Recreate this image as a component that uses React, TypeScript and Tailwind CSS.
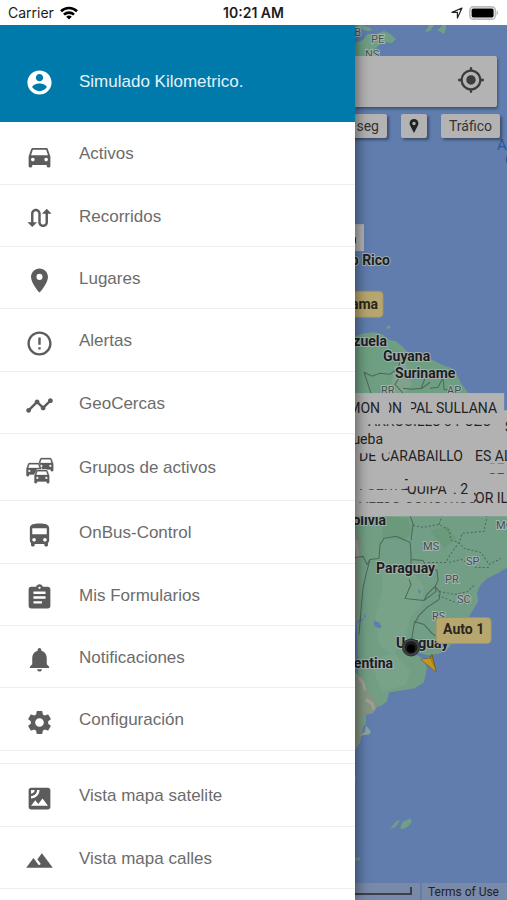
import type { ReactNode } from "react";
import type { IconType } from "react-icons";
import {
  MdAssignment,
  MdDirectionsBus,
  MdDirectionsCar,
  MdErrorOutline,
  MdMyLocation,
  MdNotifications,
  MdPlace,
  MdSatellite,
  MdSettings,
  MdSwapCalls,
  MdTerrain,
  MdTimeline,
} from "react-icons/md";

type MenuItem = {
  label: string;
  icon: IconType | typeof CarGroupIcon;
  tall?: boolean;
};

const mainItems: MenuItem[] = [
  { label: "Activos", icon: MdDirectionsCar },
  { label: "Recorridos", icon: MdSwapCalls },
  { label: "Lugares", icon: MdPlace },
  { label: "Alertas", icon: MdErrorOutline },
  { label: "GeoCercas", icon: MdTimeline },
  { label: "Grupos de activos", icon: CarGroupIcon, tall: true },
  { label: "OnBus-Control", icon: MdDirectionsBus },
  { label: "Mis Formularios", icon: MdAssignment },
  { label: "Notificaciones", icon: MdNotifications },
  { label: "Configuración", icon: MdSettings },
];

const mapItems: MenuItem[] = [
  { label: "Vista mapa satelite", icon: MdSatellite },
  { label: "Vista mapa calles", icon: MdTerrain },
];

export default function App() {
  return (
    <div className="flex h-screen flex-col overflow-hidden bg-white font-['Liberation_Sans',Arial,sans-serif]">
      <StatusBar />
      <div className="flex min-h-0 flex-1 overflow-hidden">
        <Drawer />
        <MapView />
      </div>
    </div>
  );
}

function StatusBar() {
  return (
    <header className="grid h-[25px] shrink-0 grid-cols-3 items-center px-2 font-['Inter',sans-serif] text-sm text-[#1c1c1c]">
      <div className="flex items-center gap-1.5">
        <span>Carrier</span>
        <svg viewBox="0 0 18 14" className="h-3.5 w-[18px]" fill="none" stroke="#000" strokeWidth="2.6" aria-hidden="true">
          <path d="M1 5.2a11.5 11.5 0 0 1 16 0" />
          <path d="M4 8.6a7.2 7.2 0 0 1 10 0" />
          <path d="M9 13.6 6.2 10.8a4 4 0 0 1 5.6 0z" fill="#000" stroke="none" />
        </svg>
      </div>
      <span className="text-center font-semibold">10:21 AM</span>
      <div className="flex items-center justify-end gap-1.5">
        <svg viewBox="0 0 12 12" className="size-3" fill="none" stroke="#222" strokeWidth="1.2" strokeLinejoin="round" aria-hidden="true">
          <path d="M11 1 1 5.4h5.4V11z" />
        </svg>
        <svg viewBox="0 0 30 14" className="h-3.5 w-[30px]" aria-hidden="true">
          <rect x="0.9" y="0.9" width="25.4" height="12.2" rx="3.4" fill="#fff" stroke="#bbb" strokeWidth="1.6" />
          <rect x="2.6" y="2.6" width="22" height="8.8" rx="1.6" fill="#000" />
          <path d="M27.6 4.6c2 .6 2 4.2 0 4.8z" fill="#bbb" />
        </svg>
      </div>
    </header>
  );
}

function Drawer() {
  return (
    <nav className="z-10 flex w-[70%] shrink-0 flex-col overflow-hidden bg-white shadow-[2px_0_12px_rgba(0,0,0,0.5)]">
      <div className="flex h-[97px] shrink-0 items-center bg-[#0079ab] pt-4 pl-[25px] text-[17px] text-[#e4f3f9]">
        <span className="flex w-[29px] justify-center pt-0.5">
          <AccountIcon />
        </span>
        <span className="pl-[25px]">Simulado Kilometrico.</span>
      </div>
      <MenuList items={mainItems} />
      <div className="h-[13px] shrink-0 border-b border-[#efefef]" />
      <MenuList items={mapItems} />
    </nav>
  );
}

function MenuList({ items }: { items: MenuItem[] }) {
  return (
    <ul className="shrink-0">
      {items.map(({ label, icon: Icon, tall }) => (
        <li
          key={label}
          className={`border-b border-[#efefef] ${tall ? "h-[67px]" : "h-[62px] nth-[3n+1]:h-[63px]"}`}
        >
          <button type="button" className="flex size-full items-center pt-0.5 pl-[25px] text-left text-[17px] text-[#6c6c6c]">
            <span className="flex w-[29px] justify-center pt-1">
              <Icon className="size-[29px] shrink-0 text-[#5c5c5c]" />
            </span>
            <span className="pl-[25px]">{label}</span>
          </button>
        </li>
      ))}
    </ul>
  );
}

function AccountIcon() {
  return (
    <svg viewBox="0 0 24 24" className="size-[29px]" fill="#fff" aria-hidden="true">
      <path d="M12 2C6.48 2 2 6.48 2 12s4.48 10 10 10 10-4.48 10-10S17.52 2 12 2zm0 3c1.66 0 3 1.34 3 3s-1.34 3-3 3-3-1.34-3-3 1.34-3 3-3zm0 14.2c-2.5 0-4.71-1.28-6-3.22.03-1.99 4-3.08 6-3.08 1.99 0 5.97 1.09 6 3.08-1.29 1.94-3.5 3.22-6 3.22z" />
    </svg>
  );
}

const carPath =
  "M18.92 6.01C18.72 5.42 18.16 5 17.5 5h-11c-.66 0-1.21.42-1.42 1.01L3 12v8c0 .55.45 1 1 1h1c.55 0 1-.45 1-1v-1h12v1c0 .55.45 1 1 1h1c.55 0 1-.45 1-1v-8l-2.08-5.99zM6.5 16c-.83 0-1.5-.67-1.5-1.5S5.67 13 6.5 13s1.5.67 1.5 1.5S7.33 16 6.5 16zm11 0c-.83 0-1.5-.67-1.5-1.5s.67-1.5 1.5-1.5 1.5.67 1.5 1.5-.67 1.5-1.5 1.5zM5 11l1.5-4.5h11L19 11H5z";

// Three overlapping cars, the front one drawn last
function CarGroupIcon({ className }: { className?: string }) {
  const cars = [
    [11, -2],
    [-1, 3],
    [7, 10],
  ];
  return (
    <svg viewBox="0 0 29 29" className={className} fill="currentColor" aria-hidden="true">
      {cars.map(([x, y]) => (
        <g key={x} transform={`translate(${x} ${y}) scale(0.82)`}>
          <path d="M6 4h12l4 8v9H2v-9z" fill="#fff" />
          <path d={carPath} stroke="currentColor" strokeWidth="0.4" />
        </g>
      ))}
    </svg>
  );
}

function MapView() {
  return (
    <main className="relative flex flex-1 flex-col overflow-hidden bg-[#607dae] font-['Roboto',sans-serif] text-sm text-[#333]">
      <MapCanvas />

      <div className="relative mt-[31px] mr-2.5 flex h-[51px] shrink-0 items-center rounded-r-xs bg-[#b3b3b3] pr-3 shadow-[1px_2px_3px_rgba(0,0,0,0.35)]">
        <input type="text" aria-label="Buscar" className="h-full min-w-0 flex-1 bg-transparent px-2 outline-none" />
        <button type="button" aria-label="Mi ubicación" className="-mt-1">
          <MdMyLocation className="size-7 text-[#3c3c3c]" />
        </button>
      </div>

      <div className="relative mt-[7px] mr-[7px] flex shrink-0 justify-end gap-3.5">
        <MapButton>30 seg</MapButton>
        <MapButton label="Lugares">
          <svg viewBox="0 0 10 14" className="h-3.5 w-2.5" fill="#222" fillRule="evenodd" aria-hidden="true">
            <path d="M5 0C2.2 0 .6 2 .6 4.4c0 1 .3 1.7.8 2.5L5 14l3.6-7.1c.5-.8.8-1.5.8-2.5C9.400 2 7.800 0 5 0zm0 2.800a1.700 1.700 0 1 1 0 3.400 1.700 1.700 0 0 1 0-3.400z" />
          </svg>
        </MapButton>
        <MapButton>Tráfico</MapButton>
      </div>

      <footer className="relative mt-auto flex h-[17px] shrink-0 gap-0.5 text-xs text-[#1e222b]">
        <div className="flex-1 bg-[#7989a8] pt-1 pr-2">
          <div className="h-2 border-r-2 border-b-2 border-[#3c3f47]" />
        </div>
        <a href="#terms" className="bg-[#7989a8] pt-px pr-2 pl-1.5">
          Terms of Use
        </a>
      </footer>
    </main>
  );
}

function MapButton({ label, children }: { label?: string; children: ReactNode }) {
  return (
    <button
      type="button"
      aria-label={label}
      className="flex h-6 min-w-6 shrink-0 items-center justify-center rounded-xs bg-[#b3b3b3] px-2 shadow-[2px_2px_3px_rgba(0,0,0,0.4)]"
    >
      {children}
    </button>
  );
}

type MapLabel = { text: string; x: number; y: number; end?: boolean };

const countries: MapLabel[] = [
  { text: "Puerto Rico", x: 390, y: 265, end: true },
  { text: "Venezuela", x: 387, y: 346, end: true },
  { text: "Guyana", x: 383, y: 361 },
  { text: "Suriname", x: 395, y: 378 },
  { text: "Bolivia", x: 386, y: 525, end: true },
  { text: "Paraguay", x: 376, y: 573 },
  { text: "Uruguay", x: 396, y: 648 },
  { text: "Argentina", x: 393, y: 668, end: true },
];

const states: MapLabel[] = [
  { text: "NB", x: 361, y: 36, end: true },
  { text: "PE", x: 371, y: 43 },
  { text: "NS", x: 365, y: 58 },
  { text: "RR", x: 381, y: 394 },
  { text: "AP", x: 447, y: 394 },
  { text: "MO", x: 496, y: 529 },
  { text: "MS", x: 423, y: 550 },
  { text: "SP", x: 466, y: 565 },
  { text: "PR", x: 445, y: 583 },
  { text: "SC", x: 457, y: 603 },
  { text: "RS", x: 432, y: 620 },
];

function MapCanvas() {
  return (
    <svg viewBox="355 25 152 875" preserveAspectRatio="xMinYMin slice" className="absolute inset-0 size-full">
      {/* Canada */}
      <path d="M355 43l8-3 5-6h8l8-3 6 3 6 5-4 4-10-1-6 6-8 6-4 6h-9zM425 32l4-7h5l-4 6zM437 30l4-3 1-2h4v3l-2 6zM356 27l4-2 8 2 5 3-6 1z" fill="#6f9f86" />

      {/* Northern coast */}
      <path d="M355 336l9-3 10-1 8 2 8 6 6 1 7 6 6 6 12 3 12 4 10 5 9 3 5 7 4 8 9 12H355z" fill="#6e9f82" />
      <path d="M386 327l3-2 2 2-3 2zM373 350l4-5-2-6" fill="#6e9f82" />
      <path d="M394 366l12-3 6 22-8 8h-20l8-12z" fill="#7fa28a" />
      <g fill="none" stroke="#4c685b" strokeWidth="1">
        <path d="M364 372l8 4 8-3 10 1 8-6 3-9M364 372l3 9 4 12M397 368l2 10-4 6 8 9M403 388l9 1 10-1 8-6M425 378l-4 10M430 388l8-1 5-10 1 12 14 3" />
      </g>

      {/* Southern cone */}
      <path d="M355 514h152v53l-8 5-12 6-7 7-3 8 1 8-6 10-5 8-9 15-9 13-9 6-12 2-6-2-9-1 9 6 5 9-3 15-10 6-25 4-2 9-7 5-10-1-4 4v14l-7 8z" fill="#719e84" />
      <path d="M382 560l14 10 12-6 16 22-3 20-10 10-7 24-10 14-14-8-5-30 7-26zM370 660l24-8 16 18-4 14-24 8z" fill="#78a389" />
      <path d="M385 515l22 3 5 14-8 8-22-2zM430 530l18-4 8 12-12 10z" fill="#6a9a7b" />
      <path d="M355 532l5 3 2 14-4 14 1 20-1 30-3 20zM355 672l8 6 3 12 8 6 4 9-5 8-12 2 2 12-3 15-5 8z" fill="#849582" />
      <path d="M359 677l4 5 2 8M366 699l6 4 2 6M356 540l2 18" stroke="#a29f99" strokeWidth="3" fill="none" />
      <path d="M360 735l5-4 1-6 5 6-2 3z" fill="#8aa699" />
      <path d="M374 620l5 2 3 4-3 2-5-3zM357 621l5-4 1 3-5 3zM364 613l2 3-2 2zM418 588l3 3-2 3z" fill="#5f7fb2" />
      <g fill="none" stroke="#4c685b" strokeWidth="1">
        <path d="M355 557l8-1 4 8 3-5 9-1 1-14 4-6 12-2 14 6 1 12 0 10M411 540l2-16-3-9M411 559l12 1 3 6 11 4 1 10-3 6-8 8-3 6-10-1-9-1 6-14-2-5M424 600l12-9-1-5 5 6-1 7-12 8-8 8-5 9-2 13-2 14M414 621l10 3 8 9 8 6M370 559l-4 15-3 14-2 22-2 24" />
        <path d="M413 525l10 2 16-3 10 6 2 10 8 2 5 6 17 4 8 12 12-6M460 540l2-7 22-2 3-16M439 524l3-8M459 542l-10 14-3 6-20 0M449 562l12-3 15 8 14 0M439 591l16 3 13-3 6-6M438 595l20 8 10 0" strokeDasharray="2 2" />
      </g>

      {/* Falkland Islands */}
      <path d="M390 828l7-8 3 0-5 7zM400 827l3-6 7-3 2 3-4 5-6 3z" fill="#719e84" />
      <path d="M355 857h5v3h-5zM355 775h1v5h-1z" fill="#719e84" />

      <g fontSize="11" fill="#444f50" stroke="#a5b5b0" strokeWidth="2" paintOrder="stroke">
        {states.map((s) => (
          <text key={s.text} x={s.x} y={s.y} textAnchor={s.end ? "end" : "start"}>
            {s.text}
          </text>
        ))}
      </g>
      <g fontSize="14" fontWeight="700" fill="#1b1f20" stroke="#a3aeaf" strokeWidth="2" paintOrder="stroke">
        {countries.map((c) => (
          <text key={c.text} x={c.x} y={c.y} textAnchor={c.end ? "end" : "start"}>
            {c.text}
          </text>
        ))}
      </g>
      <g fontSize="15" fill="#2b569b">
        <text x="497" y="150">A</text>
        <text x="505" y="165">O</text>
      </g>

      <MarkerNames />
      <path d="M355 224h9v27h-9z" fill="#b3b3b3" />
      <path d="M355 237v6" stroke="#333" strokeWidth="2" />

      {/* Vehicle tags */}
      <g fontSize="14" fontWeight="700" fill="#2a2720">
        <rect x="325" y="291" width="58" height="26" rx="4" fill="#b7a76e" stroke="#9c9465" />
        <text x="378" y="309" textAnchor="end">Panama</text>
        <circle cx="411" cy="647" r="9" fill="#343735" />
        <circle cx="411" cy="647" r="7" fill="#1c1d1d" stroke="#4c4f4d" />
        <circle cx="411" cy="648" r="4" fill="#000" />
        <path d="M421 659l9-1 2-4 4 17z" fill="#a88416" stroke="#715e22" strokeLinejoin="round" />
        <path d="M421 659l9-1 6 13z" fill="#c0981a" />
        <rect x="436" y="617" width="55" height="26" rx="4" fill="#b7a76e" stroke="#9c9465" />
        <text x="443" y="634">Auto 1</text>
      </g>
    </svg>
  );
}

// Name plates pile up on each other, so lower plates only show an edge of their text
function MarkerNames() {
  return (
    <g fontSize="14" fill="#222">
      <path d="M355 393h149v17h3v106H355z" fill="#b2b2b2" />

      <text x="368" y="426">ARROUILLO</text>
      <text x="444" y="426">3 POZO</text>
      <path d="M355 393h149v31H355z" fill="#b2b2b2" />
      <text x="380" y="413" textAnchor="end">RAMON</text>
      <text x="402" y="413" textAnchor="end">ON</text>
      <path d="M381 400h8v14h-8z" fill="#b2b2b2" />
      <text x="408" y="413">PAL SULLANA</text>
      <path d="M405 400h6v14h-6z" fill="#b2b2b2" />
      <text x="505" y="432">S</text>

      <text x="383" y="444" textAnchor="end">Prueba</text>
      <text x="359" y="461">DE</text>
      <text x="381" y="461">CARABAILLO</text>
      <path d="M357 449h32v4h-32z" fill="#b2b2b2" />
      <text x="475" y="461">ES AL</text>

      <text x="488" y="474">SE</text>
      <path d="M486 463h21v10h-21z" fill="#b2b2b2" />

      <text x="359" y="503">ALEJO CONSTRUC</text>
      <path d="M355 491h119v11H355z" fill="#b2b2b2" />
      <text x="359" y="490">FUERTE</text>
      <path d="M355 478h50v11h-50z" fill="#b2b2b2" />
      <text x="407" y="494">QUIPA</text>
      <path d="M405 482h42v4h-42z" fill="#b2b2b2" />
      <path d="M405 494h42v4h-42z" fill="#b2b2b2" />
      <text x="453" y="494">. 2</text>
      <text x="475" y="503">OR ILO</text>
    </g>
  );
}
